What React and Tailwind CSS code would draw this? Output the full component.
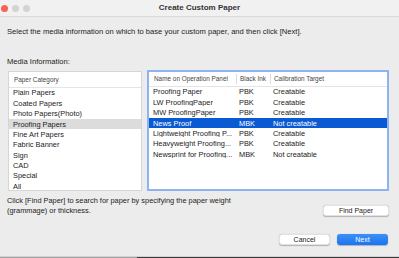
import React from "react";

const categories = [
  "Plain Papers",
  "Coated Papers",
  "Photo Papers(Photo)",
  "Proofing Papers",
  "Fine Art Papers",
  "Fabric Banner",
  "Sign",
  "CAD",
  "Special",
  "All",
];

const papers = [
  { name: "Proofing Paper", ink: "PBK", target: "Creatable" },
  { name: "LW ProofingPaper", ink: "PBK", target: "Creatable" },
  { name: "MW ProofingPaper", ink: "PBK", target: "Creatable" },
  { name: "News Proof", ink: "MBK", target: "Not creatable" },
  { name: "Lightweight Proofing P...", ink: "PBK", target: "Creatable" },
  { name: "Heavyweight Proofing...", ink: "PBK", target: "Creatable" },
  { name: "Newsprint for Proofing...", ink: "MBK", target: "Not creatable" },
];

const App = () => {
  const selectedCategory = "Proofing Papers";
  const selectedPaper = "News Proof";

  return (
    <div className="w-[399px] h-[258px] flex flex-col bg-[#ececec] text-[#222] font-['Liberation_Sans',Arial,sans-serif] overflow-hidden">
      <div className="h-[256px] flex flex-col">
        {/* title bar */}
        <div className="h-[17px] shrink-0 grid grid-cols-[1fr_auto_1fr] items-center bg-[#f1f1f1] border-b border-[#d9d9d9]">
          <div className="flex items-center gap-[4px] pl-[1px]">
            <span className="w-[7px] h-[7px] rounded-full bg-[#fe5f57]" />
            <span className="w-[7px] h-[7px] rounded-full bg-[#d3d3d3]" />
            <span className="w-[7px] h-[7px] rounded-full bg-[#d3d3d3]" />
          </div>
          <div className="text-[8px] font-bold text-[#333] leading-none">Create Custom Paper</div>
          <div />
        </div>

        <div className="flex flex-col pl-[7px]">
          <p className="mt-[10px] text-[7.6px] leading-[10px]">
            Select the media information on which to base your custom paper, and then click [Next].
          </p>
          <p className="mt-[20px] text-[7.6px] leading-[10px]">Media Information:</p>

          <div className="mt-[3px] h-[121px] flex gap-[5px]">
            {/* category list */}
            <div className="ml-[1px] w-[134px] mt-[1px] h-[120px] bg-white border border-[#d6d6d6] flex flex-col">
              <div className="h-[16px] shrink-0 flex items-center pl-[5px] text-[6.4px] text-[#444] border-b border-[#e4e4e4]">
                Paper Category
              </div>
              {categories.map((c) => (
                <div
                  key={c}
                  className={`h-[10.35px] shrink-0 flex items-center pl-[4px] text-[7.4px] leading-none ${
                    c === selectedCategory ? "bg-[#dcdcdc]" : ""
                  }`}
                >
                  {c}
                </div>
              ))}
            </div>

            {/* paper table */}
            <div className="w-[242px] h-[121px] bg-white border-2 border-[#8db3f4] flex flex-col">
              <div className="h-[15px] shrink-0 flex items-center text-[6.4px] text-[#444] border-b border-[#e4e4e4]">
                <div className="w-[88px] pl-[5px] h-[10px] flex items-center border-r border-[#dcdcdc]">
                  Name on Operation Panel
                </div>
                <div className="w-[34px] pl-[3px] h-[10px] flex items-center border-r border-[#dcdcdc]">
                  Black Ink
                </div>
                <div className="pl-[3px]">Calibration Target</div>
              </div>
              {papers.map((p) => {
                const sel = p.name === selectedPaper;
                return (
                  <div
                    key={p.name}
                    className={`h-[10.35px] shrink-0 flex items-center text-[7.4px] leading-none ${
                      sel ? "bg-[#0a5ad3] text-white" : ""
                    }`}
                  >
                    <div className="w-[88px] pl-[4px] whitespace-nowrap overflow-hidden">{p.name}</div>
                    <div className="w-[34px] pl-[2px]">{p.ink}</div>
                    <div className="pl-[2px]">{p.target}</div>
                  </div>
                );
              })}
            </div>
          </div>

          <div className="mt-[5px] flex items-start pr-[10px]">
            <p className="flex-1 text-[7.4px] leading-[9.5px]">
              Click [Find Paper] to search for paper by specifying the paper weight
              <br />
              (grammage) or thickness.
            </p>
            <button className="mt-[9px] w-[66px] h-[11px] rounded-[3px] bg-white text-[7px] leading-none text-[#222] shadow-[0_0.5px_1px_rgba(0,0,0,0.25)] border border-[#e2e2e2]">
              Find Paper
            </button>
          </div>

          <div className="mt-[18px] flex justify-end gap-[7px] pr-[11px]">
            <button className="w-[51px] h-[11px] rounded-[3px] bg-white text-[7px] leading-none text-[#222] shadow-[0_0.5px_1px_rgba(0,0,0,0.25)] border border-[#e2e2e2]">
              Cancel
            </button>
            <button className="w-[51px] h-[11px] rounded-[3px] bg-gradient-to-b from-[#3b8ff7] to-[#1a74f1] text-[7px] leading-none text-white shadow-[0_0.5px_1px_rgba(0,0,0,0.25)]">
              Next
            </button>
          </div>
        </div>
      </div>
      <div className="h-[2px] flex flex-col">
        <div className="h-[1px] bg-[#d2d2d2]" />
        <div className="h-[1px] flex">
          <div className="w-[137px] bg-[#a0a0a0]" />
          <div className="flex-1 bg-[#3a3a3a]" />
        </div>
      </div>
    </div>
  );
};

export default App;
